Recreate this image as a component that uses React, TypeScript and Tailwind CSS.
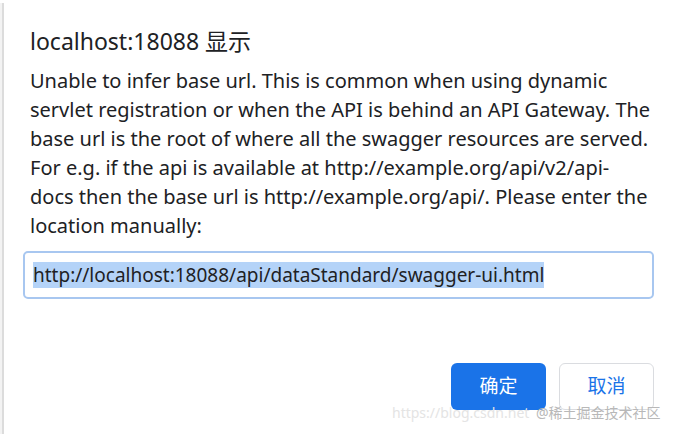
import React from "react";

export default function App() {
  const url = "http://localhost:18088/api/dataStandard/swagger-ui.html";

  return (
    <div className="relative w-[676px] h-[434px] overflow-hidden bg-white flex" style={{ fontFamily: '"Noto Sans", "Noto Sans CJK SC", sans-serif' }}>
      {/* left edge of the window behind */}
      <div className="w-[4px] shrink-0 mt-[3px] border-r-[2px] border-[#dcdcdc] bg-[#f3f3f3]" />

      <div className="flex-1 flex flex-col pl-[26px] pr-[22px] pt-[26px]">
        <h1 className="text-[23px] leading-[30px] text-[#202124]">localhost:18088 显示</h1>

        <p className="mt-[10px] text-[20px] leading-[29px] text-[#202124]">
          Unable to infer base url. This is common when using dynamic servlet registration or when the API is behind an API Gateway. The base url is the root of where all the swagger resources are served. For e.g. if the api is available at http://example.org/api/v2/api-
          <br />
          docs then the base url is http://example.org/api/. Please enter the location manually:
        </p>

        <div className="mt-[11px] -ml-[7px] h-[48px] rounded-[5px] border-[2px] border-[#a8c7f0] flex items-center px-[8px]">
          <span className="text-[19px] leading-[26px] text-[#202124] bg-[#b4d3f8]">{url}</span>
        </div>

        <div className="mt-[64px] flex justify-end gap-[13px]">
          <button className="w-[95px] h-[47px] rounded-[6px] bg-[#1a73e8] text-white text-[19px]">确定</button>
          <button className="w-[95px] h-[47px] rounded-[6px] border border-[#dadce0] bg-white text-[#1a73e8] text-[19px]">取消</button>
        </div>
      </div>

      {/* watermark */}
      <div className="absolute left-[392px] top-[402px] text-[14px] text-[#e4e4e4]">https://blog.csdn.net</div>
      <div className="absolute left-[536px] top-[402px] text-[14px] text-[#b8b8b8]">@稀土掘金技术社区</div>
    </div>
  );
}
